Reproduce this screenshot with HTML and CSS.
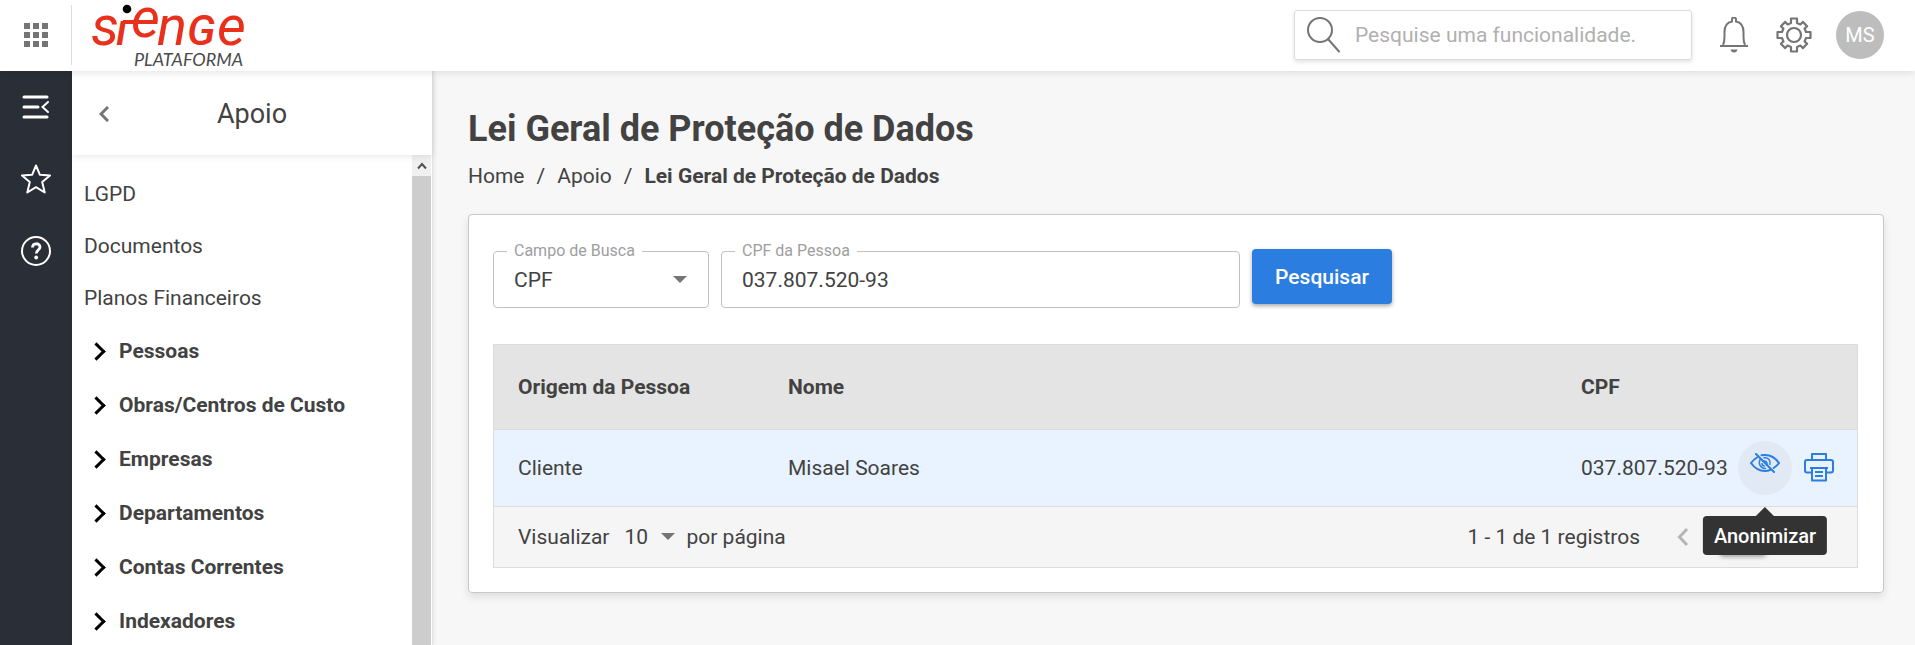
FILE: index.html
```
<!DOCTYPE html>
<html lang="pt-BR">
<head>
    <meta charset="utf-8">
    <title>Sienge Plataforma</title>
    <link rel="stylesheet" href="styles.css">
</head>
<body>
    <header class="topbar">
        <button class="apps-btn" type="button">
            <svg width="24" height="24" viewBox="0 0 24 24" fill="#757575">
                <path d="M0 0h6v6H0zM9 0h6v6H9zM18 0h6v6h-6zM0 9h6v6H0zM9 9h6v6H9zM18 9h6v6h-6zM0 18h6v6H0zM9 18h6v6H9zM18 18h6v6h-6z"/>
            </svg>
        </button>
        <a class="logo" href="#">
            <svg width="156" height="70" viewBox="0 0 156 70">
                <g class="logo-name">
                    <text x="-1" y="45">s</text>
                    <text class="logo-i" x="24" y="45">ı</text>
                    <text x="39" y="37">e</text>
                    <text x="65" y="45">n</text>
                    <text class="logo-g" x="95" y="45">G</text>
                    <text x="125" y="45">e</text>
                </g>
                <path d="M31 22h13" stroke="#e8301c" stroke-width="4"/>
                <circle cx="35" cy="9" r="4.3" fill="#000"/>
                <text class="logo-sub" x="42" y="66">PLATAFORMA</text>
            </svg>
        </a>
        <label class="search">
            <svg width="34" height="36" viewBox="0 0 34 36" fill="none" stroke="#757575" stroke-width="2" stroke-linecap="round">
                <circle cx="13" cy="13" r="12"/>
                <path d="M21.500 22.500l10.500 12"/>
            </svg>
            <input type="text" placeholder="Pesquise uma funcionalidade.">
        </label>
        <div class="tools">
            <button class="tool-btn" type="button">
                <svg width="30" height="36" viewBox="0 0 30 36" fill="none" stroke="#757575" stroke-width="2">
                    <path d="M1 29h28M4 28c1-2 1.500-4 1.500-8v-5C5.500 9 8 5.500 13 4.500V2.500a2 2 0 0 1 4 0v2c5 1 7.500 4.500 7.500 10.500v5c0 4 .5 6 1.500 8"/>
                    <path d="M11.500 32.500h7c-.5 2-1.500 3-3.500 3s-3-1-3.500-3z" fill="#757575" stroke="none"/>
                </svg>
            </button>
            <button class="tool-btn" type="button">
                <svg width="36" height="36" viewBox="0 0 36 36" fill="none" stroke="#757575" stroke-width="2.200" stroke-linejoin="round">
                    <path d="M15 6V1.500H21V6L24.400 7.400 26.800 4.900 31.100 9.200 28.600 11.600 30 15H34.500V21H30L28.600 24.400 31.100 26.800 26.800 31.100 24.400 28.600 21 30V34.500H15V30L11.600 28.600 9.200 31.100 4.900 26.800 7.400 24.400 6 21H1.500V15H6L7.400 11.600 4.900 9.200 9.200 4.900 11.600 7.400z"/>
                    <circle cx="18" cy="18" r="7"/>
                </svg>
            </button>
        </div>
        <button class="avatar" type="button">MS</button>
    </header>

    <div class="layout">
        <nav class="rail">
            <button class="rail-btn" type="button">
                <svg width="28" height="24" viewBox="0 0 28 24" fill="none" stroke="#fff" stroke-width="3" stroke-linecap="round">
                    <path d="M2 2h23M2 12h14M2 22h23"/>
                    <path d="M26 7l-5.500 5 5.500 5" stroke-width="2"/>
                </svg>
            </button>
            <button class="rail-btn" type="button">
                <svg width="30" height="30" viewBox="0 0 30 30" fill="none" stroke="#fff" stroke-width="2" stroke-linejoin="round">
                    <path d="M15 1.500l3.800 9.200 10.200.8-7.800 6.600 2.500 10.400-8.700-5.300-8.700 5.300 2.500-10.400L1 11.500l10.200-.8z"/>
                </svg>
            </button>
            <button class="rail-btn" type="button">
                <svg width="30" height="30" viewBox="0 0 30 30" fill="none" stroke="#fff">
                    <circle cx="15" cy="15" r="14" stroke-width="2"/>
                    <path d="M11.500 11.500c0-5 7.500-4.800 7.500-.4 0 3-3.700 2.900-3.700 6.400" stroke-width="2.800"/>
                    <circle cx="15.200" cy="21.500" r="1.900" fill="#fff" stroke="none"/>
                </svg>
            </button>
        </nav>

        <aside class="menu">
            <div class="menu-head">
                <button class="back-btn" type="button">
                    <svg width="10" height="16" viewBox="0 0 10 16" fill="none" stroke="#757575" stroke-width="3">
                        <path d="M9 1L2 8l7 7"/>
                    </svg>
                </button>
                <h2>Apoio</h2>
            </div>
            <div class="menu-body">
                <div class="menu-list">
                    <a class="menu-link" href="#">LGPD</a>
                    <a class="menu-link" href="#">Documentos</a>
                    <a class="menu-link" href="#">Planos Financeiros</a>
                    <button class="menu-group" type="button">Pessoas</button>
                    <button class="menu-group" type="button">Obras/Centros de Custo</button>
                    <button class="menu-group" type="button">Empresas</button>
                    <button class="menu-group" type="button">Departamentos</button>
                    <button class="menu-group" type="button">Contas Correntes</button>
                    <button class="menu-group" type="button">Indexadores</button>
                </div>
                <div class="scrollbar">
                    <div class="scroll-up">
                        <svg width="10" height="8" viewBox="0 0 10 8" fill="none" stroke="#505050" stroke-width="2">
                            <path d="M1 6.500l4-4.500 4 4.500"/>
                        </svg>
                    </div>
                    <div class="scroll-thumb"></div>
                </div>
            </div>
        </aside>

        <main class="content">
            <h1>Lei Geral de Proteção de Dados</h1>
            <nav class="breadcrumb">
                <a href="#">Home</a>
                <span>/</span>
                <a href="#">Apoio</a>
                <span>/</span>
                <strong>Lei Geral de Proteção de Dados</strong>
            </nav>

            <section class="card">
                <form class="filters">
                    <div class="field field-select">
                        <label for="campo">Campo de Busca</label>
                        <select id="campo">
                            <option>CPF</option>
                        </select>
                    </div>
                    <div class="field field-text">
                        <label for="cpf">CPF da Pessoa</label>
                        <input type="text" id="cpf" value="037.807.520-93">
                    </div>
                    <button class="search-btn" type="button">Pesquisar</button>
                </form>

                <div class="grid">
                    <table>
                        <thead>
                            <tr>
                                <th class="col-origin">Origem da Pessoa</th>
                                <th>Nome</th>
                                <th class="col-cpf">CPF</th>
                                <th class="col-actions"></th>
                            </tr>
                        </thead>
                        <tbody>
                            <tr>
                                <td>Cliente</td>
                                <td>Misael Soares</td>
                                <td class="col-cpf">037.807.520-93</td>
                                <td class="col-actions">
                                    <div class="actions">
                                        <button class="icon-btn active" type="button" aria-describedby="tip">
                                            <svg class="icon-eye" width="30" height="20" viewBox="0 0 30 20" fill="none" stroke="#2b7de0" stroke-width="2" stroke-linecap="round">
                                                <path d="M7 4.500C4.500 6 2.500 8 1 10c3.500 5 8.500 8 14 8 1.800 0 3.500-.3 5-1M11.500 2.300C12.600 2 13.800 2 15 2c5.500 0 10.500 3 14 8-1.400 2-3.200 3.700-5.300 5"/>
                                                <path d="M10 6.500c-2 5 1 9 5.500 9M14 4.800c4-.5 6.800 2.500 6 6.500M13 8.200c2.500-1 4.500 1 4 3.300M12 10.500c0 1.500 1 2.500 2.500 2.500" stroke-width="1.500"/>
                                                <path d="M6 1l18 18"/>
                                            </svg>
                                            <span class="tooltip" id="tip" role="tooltip">Anonimizar</span>
                                        </button>
                                        <button class="icon-btn" type="button">
                                            <svg width="30" height="29" viewBox="0 0 30 29" fill="none" stroke="#2b7de0" stroke-width="2" stroke-linejoin="round">
                                                <path d="M8 7V1h14v6M7 19.500H3a2 2 0 0 1-2-2V9a2 2 0 0 1 2-2h24a2 2 0 0 1 2 2v8.500a2 2 0 0 1-2 2h-4"/>
                                                <path d="M6 15h18M8 15v12.500h14V15M11 19h8M11 23h8"/>
                                            </svg>
                                        </button>
                                    </div>
                                </td>
                            </tr>
                        </tbody>
                    </table>
                    <div class="grid-foot">
                        <label for="por-pagina">Visualizar</label>
                        <div class="page-size">
                            <select id="por-pagina">
                                <option>10</option>
                            </select>
                        </div>
                        <span>por página</span>
                        <div class="pager">
                            <span>1 - 1 de 1 registros</span>
                            <button class="prev-btn" type="button">
                                <svg width="12" height="18" viewBox="0 0 12 18" fill="none" stroke="#b5b5b5" stroke-width="3">
                                    <path d="M10 1L2.500 9l7.500 8"/>
                                </svg>
                            </button>
                            <button class="page-btn" type="button"></button>
                        </div>
                    </div>
                </div>
            </section>
        </main>
    </div>
</body>
</html>
```

FILE: styles.css
```
* {
    box-sizing: border-box;
}
body {
    margin: 0;
    height: 100vh;
    display: flex;
    flex-direction: column;
    overflow: hidden;
    background: #f7f7f7;
    color: #424242;
    font-family: Roboto, "Liberation Sans", sans-serif;
    font-size: 21px;
    line-height: 24px;
}
button, input, select {
    font: inherit;
    color: inherit;
    background: none;
    border: none;
    padding: 0;
    margin: 0;
    outline: none;
}
button {
    display: flex;
    align-items: center;
    justify-content: center;
    cursor: pointer;
}
select {
    appearance: none;
    width: 100%;
}
a {
    color: inherit;
    text-decoration: none;
}

/* top bar */
.topbar {
    position: relative;
    z-index: 2;
    display: flex;
    align-items: center;
    height: 71px;
    flex: none;
    padding: 0 31px 1px 0;
    background: #fff;
    box-shadow: 0 1px 8px rgba(0, 0, 0, 0.12);
}
.apps-btn {
    width: 72px;
    height: 60px;
    border-right: 1px solid #dcdcdc;
}
.logo {
    margin-left: 20px;
}
.logo svg {
    display: block;
    overflow: visible;
}
.logo-name {
    font-size: 56px;
    font-style: italic;
    fill: #e8301c;
}
.logo-i {
    font-size: 44px;
    font-weight: 500;
}
.logo-g {
    font-size: 43px;
    font-weight: 500;
}
.logo-sub {
    font-family: Lato, sans-serif;
    font-size: 18px;
    font-style: italic;
    fill: #4a4a4a;
}
.search {
    display: flex;
    align-items: center;
    gap: 14px;
    width: 398px;
    height: 50px;
    margin-left: auto;
    padding: 0 12px;
    border: 1px solid #dcdcdc;
    border-radius: 3px;
    box-shadow: 0 2px 4px rgba(0, 0, 0, 0.12);
}
.search svg {
    flex: none;
}
.search input {
    flex: 1;
    min-width: 0;
}
.search input::placeholder {
    color: #b0b0b0;
}
.tools {
    display: flex;
    margin: 0 12px;
}
.tool-btn {
    width: 60px;
    height: 48px;
}
.avatar {
    width: 48px;
    height: 48px;
    border-radius: 50%;
    background: #bdbdbd;
    color: #fff;
    font-size: 20px;
}

/* side navigation */
.layout {
    display: flex;
    flex: 1;
    min-height: 0;
}
.rail {
    width: 72px;
    flex: none;
    background: #2a2e36;
}
.rail-btn {
    width: 72px;
    height: 72px;
}
.menu {
    position: relative;
    width: 361px;
    flex: none;
    display: flex;
    flex-direction: column;
    background: #fff;
    border-right: 1px solid #e4e4e4;
    box-shadow: 1px 0 4px rgba(0, 0, 0, 0.08);
}
.menu-head {
    position: relative;
    z-index: 1;
    display: flex;
    align-items: center;
    height: 84px;
    flex: none;
    padding: 1px 24px 0;
    box-shadow: 0 1px 8px rgba(0, 0, 0, 0.1);
}
.back-btn {
    width: 16px;
    height: 24px;
}
.menu-head h2 {
    flex: 1;
    margin: 0;
    padding-right: 16px;
    text-align: center;
    font-size: 27px;
    font-weight: 400;
}
.menu-body {
    display: flex;
    flex: 1;
    min-height: 0;
}
.menu-list {
    flex: 1;
    padding: 13px 12px;
    overflow: hidden;
}
.menu-link {
    display: flex;
    align-items: center;
    height: 52px;
}
.menu-group {
    width: 100%;
    height: 54px;
    justify-content: flex-start;
    padding-left: 8px;
    font-weight: 700;
}
.menu-group::before {
    content: "";
    width: 10px;
    height: 10px;
    margin-right: 16px;
    margin-left: -2px;
    border: solid #000;
    border-width: 3px 3px 0 0;
    transform: rotate(45deg);
}
.scrollbar {
    display: flex;
    flex-direction: column;
    width: 20px;
    padding-right: 1px;
}
.scroll-up {
    display: flex;
    align-items: center;
    justify-content: center;
    height: 21px;
    background: #f0f0f0;
}
.scroll-thumb {
    flex: 1;
    background: #cdcdcd;
}

/* page */
.content {
    flex: 1;
    min-width: 0;
    padding: 37px 31px 36px 35px;
}
h1 {
    margin: 0;
    font-size: 36px;
    line-height: 42px;
}
.breadcrumb {
    display: flex;
    gap: 12px;
    margin: 14px 0 26px;
}
.card {
    padding: 34px 25px 24px 24px;
    background: #fff;
    border: 1px solid #c8c8c8;
    border-radius: 4px;
    box-shadow: 0 4px 8px rgba(0, 0, 0, 0.1);
}
.filters {
    display: flex;
    align-items: flex-start;
    gap: 12px;
}
.field {
    position: relative;
    height: 57px;
    margin-top: 2px;
    border: 1px solid #c2c2c2;
    border-radius: 4px;
}
.field label {
    position: absolute;
    top: -13px;
    left: 13px;
    padding: 0 7px;
    background: #fff;
    color: #9e9e9e;
    font-size: 16px;
}
.field select,
.field input {
    width: 100%;
    height: 55px;
    padding: 0 20px;
}
.field-select {
    width: 216px;
}
.field-text {
    width: 519px;
}
.field-select::after,
.page-size::after {
    content: "";
    position: absolute;
    right: 21px;
    top: 50%;
    margin-top: -4px;
    border: solid transparent;
    border-width: 7px 7px 0;
    border-top-color: #757575;
    pointer-events: none;
}
.search-btn {
    width: 140px;
    height: 55px;
    border-radius: 4px;
    background: #2b7de0;
    color: #fff;
    font-weight: 500;
    box-shadow: 0 2px 4px rgba(0, 0, 0, 0.35);
}

/* results */
.grid {
    margin-top: 36px;
    border: 1px solid #dcdcdc;
}
table {
    width: 100%;
    border-collapse: collapse;
    table-layout: fixed;
}
th, td {
    padding: 0 0 0 24px;
    text-align: left;
    border-bottom: 1px solid #dcdcdc;
}
th {
    height: 84px;
    background: #e4e4e4;
}
td {
    height: 77px;
    background: #e8f3ff;
}
.col-origin {
    width: 270px;
}
.col-cpf {
    width: 181px;
    white-space: nowrap;
}
.col-actions {
    width: 119px;
    padding: 0;
}
.actions {
    display: flex;
}
.icon-btn {
    position: relative;
    width: 54px;
    height: 54px;
    border-radius: 50%;
}
.icon-btn.active {
    background: #e1e9f5;
}
.icon-eye {
    margin-bottom: 10px;
}
.tooltip {
    position: absolute;
    z-index: 3;
    top: 75px;
    left: 50%;
    transform: translateX(-50%);
    padding: 8px 11px 7px;
    border-radius: 4px;
    background: #333;
    color: #fff;
    font-size: 20px;
    font-weight: 500;
}
.tooltip::before {
    content: "";
    position: absolute;
    left: 50%;
    top: -9px;
    margin-left: -9px;
    border: solid transparent;
    border-width: 0 9px 9px;
    border-bottom-color: #333;
}
.grid-foot {
    display: flex;
    align-items: center;
    height: 60px;
    padding: 0 91px 0 24px;
    background: #f5f5f5;
}
.page-size {
    position: relative;
    width: 50px;
    margin: 0 12px 0 15px;
}
.page-size::after {
    right: 0;
}
.pager {
    display: flex;
    align-items: center;
    margin-left: auto;
}
.prev-btn {
    margin-left: 37px;
}
.page-btn {
    width: 46px;
    height: 36px;
    margin-left: 31px;
    border-radius: 4px;
    background: #f5f5f5;
    box-shadow: 0 2px 4px rgba(0, 0, 0, 0.35);
}
```
